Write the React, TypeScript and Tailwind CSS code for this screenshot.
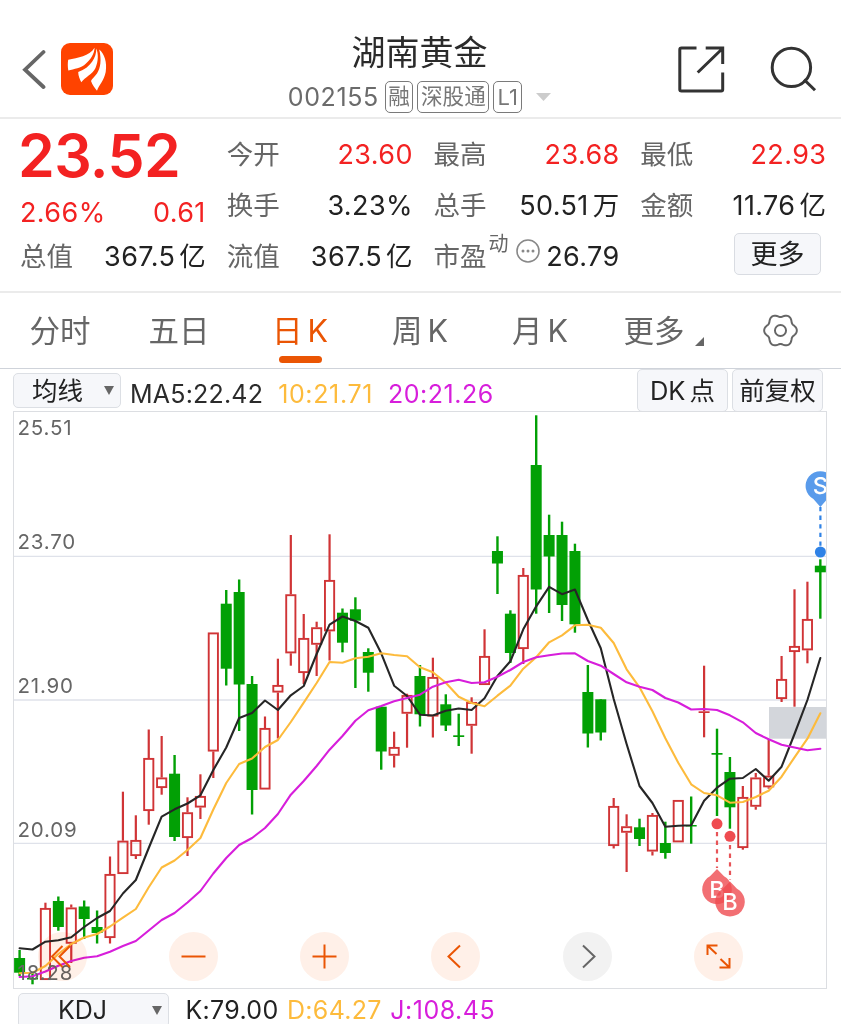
import type { ReactNode } from "react";

type Candle = [color: "r" | "g", high: number, open: number, close: number, low: number];

const X0 = 19.6;
const STEP = 12.915;
const cx = (i: number) => X0 + STEP * i;

const candles: Candle[] = [
  ["g", 950, 958, 972.7, 976], ["g", 972, 978, 979.5, 984.3], ["r", 902.7, 908, 980, 980], ["g", 896.5, 901, 927, 930.7],
  ["r", 904.5, 907.5, 943.7, 963], ["g", 900.5, 906.5, 919, 939], ["g", 910.5, 927, 933, 943.5], ["r", 856.5, 874, 938, 943.5],
  ["r", 791.7, 840.7, 874, 874], ["r", 815.3, 840, 856, 859], ["r", 729.5, 758, 811, 824.7], ["r", 736, 777.5, 788, 794.7],
  ["g", 755, 773.7, 837, 841], ["r", 797.3, 812.3, 838, 856], ["r", 774.3, 796, 807.5, 819], ["r", 632.5, 632.5, 751.5, 778],
  ["g", 590, 603.7, 668.7, 685.5], ["g", 579.5, 592, 684.5, 731], ["g", 676, 684, 790, 814.5], ["r", 716.5, 728, 789.5, 789.5],
  ["r", 658.7, 685, 692.5, 738.5], ["r", 535, 594.3, 653.3, 665.7], ["r", 614, 638, 673, 684], ["r", 621.7, 627.3, 644.7, 676],
  ["r", 534.3, 580, 631.3, 660.5], ["g", 608.5, 612.7, 642.7, 652.3], ["g", 597.3, 609.3, 620.7, 688], ["g", 648.3, 652, 672.7, 691.7],
  ["g", 706.7, 706.7, 751.5, 769.7], ["r", 731.7, 747, 755.7, 767.5], ["r", 693.7, 695, 713.7, 747.7], ["g", 665, 676, 714.3, 726.5],
  ["r", 657.7, 677, 716.5, 737.5], ["g", 694.3, 704.3, 725.5, 731], ["g", 713.7, 735.3, 737, 746], ["r", 697.3, 702, 725.7, 753.7],
  ["r", 629.3, 656, 685, 685], ["g", 536.3, 551, 563.5, 594], ["g", 610.3, 613.7, 653, 663], ["r", 568, 575, 649, 664],
  ["g", 415.3, 465, 589.5, 613.7], ["g", 514.7, 535, 556.5, 613], ["g", 521.7, 535, 605, 621], ["g", 543.7, 551, 624.3, 632.7],
  ["g", 665, 692, 733.5, 747.5], ["g", 699.3, 699.3, 732.5, 740.5], ["r", 798, 806, 846, 848.5], ["r", 814.3, 826.3, 832.7, 872],
  ["g", 818.7, 827.3, 839, 846], ["r", 813, 815, 851.5, 855.5], ["g", 821.7, 843, 853, 858.7], ["r", 800, 800, 842.3, 842.3],
  ["g", 796.5, 825, 826.5, 843.7], ["r", 665.7, 711.3, 713, 737.3], ["g", 728.7, 753, 754.7, 816], ["g", 757, 772, 807.3, 828.7],
  ["r", 786, 797, 848, 849.7], ["r", 773, 777.5, 806.7, 809.7], ["r", 739.3, 775.7, 787.3, 788.7], ["r", 656, 679, 699, 702],
  ["r", 589.3, 646, 652, 706.7], ["r", 581.7, 619, 650.3, 663.3], ["g", 559.3, 565.7, 572.3, 618.7],
];

const ma5 = [
  948.3, 949.5, 941.7, 940.3, 937.3, 927, 918, 911, 893.5, 880, 848, 816.7, 809.3, 803.5, 795.3, 770, 747.5, 718, 713, 700.5, 710,
  695.3, 686, 654, 624.7, 616.5, 621, 627.7, 653.3, 685.7, 696, 714.7, 715.5, 710.7, 708.5, 710, 698.3, 676, 661.3, 629.3, 606.3,
  586.9, 594.2, 589.5, 620, 648.3, 699, 744, 786, 803, 826.7, 825.7, 825.2, 800.7, 787.7, 778.7, 778, 769, 780.7, 766.7, 734, 700, 658,
];
const ma10 = [
  973.3, 972.7, 966, 954, 944, 937.5, 934, 926.5, 917.7, 909, 887.3, 867.5, 860.5, 850, 838, 809.5, 783, 764, 758.5, 747, 740, 722,
  702.7, 683, 662, 662.7, 658.3, 656.7, 653.3, 655, 656.2, 667.3, 672.3, 682.7, 696.7, 703, 706.3, 695.7, 685.7, 668.7, 657.3, 642.3,
  635.3, 625.3, 624.7, 627.7, 643, 669.3, 687.3, 711.3, 738.3, 762.7, 784.3, 793, 795.3, 802.7, 802, 797, 790.7, 776.7, 757.3, 738.7, 713.3,
];
const ma20 = [
  977, 976.3, 971.5, 965.7, 961, 957.7, 956.3, 951.7, 946, 941, 930.5, 920, 913, 902.5, 891, 873.5, 858, 845, 838, 828, 814, 794.7,
  781, 766, 749.7, 736, 720.7, 710.3, 706, 701.3, 698, 694.7, 686.7, 682.3, 679.7, 683, 682.3, 676.7, 670, 662, 657.3, 655.3, 653.5,
  653.3, 661, 665.7, 674, 682.3, 686.7, 690, 698, 702.5, 709.5, 709, 710, 715.3, 722.3, 733, 739.3, 744.7, 747.5, 750.3, 748.7,
];
const toPoints = (v: number[]) => v.map((y, i) => `${cx(i).toFixed(2)},${y}`).join(" ");

function Marker({ x, y, color, letter, up }: { x: number; y: number; color: string; letter: string; up: boolean }) {
  const d = up
    ? `M${x} ${y - 20.3} L${x + 7} ${y - 13} A14.8 14.8 0 1 1 ${x - 7} ${y - 13} Z`
    : `M${x} ${y + 21} L${x + 7} ${y + 13} A14.8 14.8 0 1 0 ${x - 7} ${y + 13} Z`;
  return (
    <g>
      <path d={d} fill={color} fillOpacity="0.8" />
      <text x={x} y={y + 8.3} textAnchor="middle" fontSize="23.5" fontWeight="500" fill="#fff">
        {letter}
      </text>
    </g>
  );
}

function KLineChart() {
  return (
    <svg viewBox="14 412 812 576" className="block h-full w-full font-[Inter,sans-serif]">
      {[556.3, 700, 843.3].map((y) => (
        <line key={y} x1="14" x2="826" y1={y} y2={y} stroke="#dfe2ea" strokeWidth="1.3" />
      ))}
      <rect x="769" y="707" width="58" height="31.7" fill="#d3d6db" />
      {candles.map(([color, hi, top, bottom, lo], i) => {
        const x = cx(i);
        if (color === "g") {
          return (
            <g key={i} fill="#02a005">
              <rect x={x - 1.2} y={hi} width="2.4" height={lo - hi} />
              <rect x={x - 5.5} y={top} width="11" height={bottom - top} />
            </g>
          );
        }
        return (
          <g key={i} fill="#d03436">
            <rect x={x - 1.1} y={hi} width="2.2" height={Math.max(0, top - hi)} />
            <rect x={x - 1.1} y={bottom} width="2.2" height={Math.max(0, lo - bottom)} />
            {bottom - top < 3 ? (
              <rect x={x - 5.5} y={top} width="11" height={bottom - top} />
            ) : (
              <rect x={x - 4.6} y={top + 0.9} width="9.2" height={bottom - top - 1.8} fill="none" stroke="#d03436" strokeWidth="1.9" />
            )}
          </g>
        );
      })}
      <g fill="none" strokeWidth="2.1" strokeLinejoin="round" strokeLinecap="round">
        <polyline points={toPoints(ma5)} stroke="#262626" />
        <polyline points={toPoints(ma10)} stroke="#fdbb3c" />
        <polyline points={toPoints(ma20)} stroke="#d71edb" />
      </g>
      <g strokeWidth="2.2" strokeDasharray="4.3 4.3">
        <line x1="820.4" x2="820.4" y1="507" y2="546" stroke="#2f82e6" />
        <line x1="717" x2="717" y1="832" y2="868" stroke="#e75458" />
        <line x1="730" x2="730" y1="845" y2="880" stroke="#e75458" />
      </g>
      <circle cx="820.4" cy="552" r="5.5" fill="#2f82e6" />
      <circle cx="717" cy="823.8" r="5.5" fill="#ef4b50" />
      <circle cx="730" cy="836.3" r="5.5" fill="#ef4b50" />
      <Marker x={820.4} y={486} color="#2f82e6" letter="S" up={false} />
      <Marker x={717} y={889.3} color="#ef4b50" letter="B" up />
      <Marker x={730} y={901.7} color="#ef4b50" letter="B" up />
      <g fontSize="20.5" fill="#666" letterSpacing="0.8">
        <text x="17.5" y="435.3">25.51</text>
        <text x="17.5" y="549.3">23.70</text>
        <text x="17.5" y="693">21.90</text>
        <text x="17.5" y="836.5">20.09</text>
        <text x="17.5" y="980.3">18.28</text>
      </g>
    </svg>
  );
}

function RoundButton({ gray, children }: { gray?: boolean; children: ReactNode }) {
  return (
    <button className={`relative size-[49px] ${gray ? "text-[#666]" : "text-[#ea5504]"}`}>
      <span className={`absolute inset-0 rounded-full mix-blend-multiply ${gray ? "bg-[#f2f2f2]" : "bg-[#fff0e8]"}`} />
      <svg viewBox="0 0 49 49" fill="none" stroke="currentColor" strokeWidth="2" className="relative block size-full">
        {children}
      </svg>
    </button>
  );
}

function Field({ label, value, unit, red }: { label: string; value: string; unit?: string; red?: boolean }) {
  return (
    <div className="flex h-[51px] items-center justify-between">
      <span className="pt-px text-[26.5px] text-[#666]">{label}</span>
      <span className={`flex items-center pt-px text-[27px] ${red ? "text-[#f32222]" : "text-[#222]"}`}>
        <span className="-mr-[0.4px] tracking-[0.4px]">{value}</span>
        {unit && <span className="ml-[4.4px] text-[26.5px]">{unit}</span>}
      </span>
    </div>
  );
}

function Badge({ children }: { children: ReactNode }) {
  return (
    <span className="flex h-8 items-center rounded-[5px] border border-[#7a7a7a] px-[2.5px] text-[21.6px] leading-none text-[#777]">{children}</span>
  );
}

function gearPath() {
  const pts: string[] = [];
  for (let a = 0; a < 360; a += 4) {
    const t = (a * Math.PI) / 180;
    const r = 14.6 + 1.4 * Math.cos(6 * t) - 0.1 * Math.cos(12 * t);
    pts.push(`${(18 + r * Math.cos(t)).toFixed(2)} ${(18 + r * Math.sin(t)).toFixed(2)}`);
  }
  return `M${pts.join("L")}Z`;
}

function Tab({ children, active }: { children: ReactNode; active?: boolean }) {
  return (
    <div className={`relative flex w-[120px] items-center justify-center gap-[5px] pt-[2px] text-[30.5px] ${active ? "text-[#ea5504]" : "text-[#666]"}`}>
      {children}
      {active && <span className="absolute bottom-[5px] left-[39px] h-[7px] w-[43px] rounded-full bg-[#ea5504]" />}
    </div>
  );
}

export default function App() {
  return (
    <div className="flex h-[1024px] w-[841px] flex-col overflow-hidden bg-white font-[Inter,'Noto_Sans_CJK_SC',sans-serif] leading-none whitespace-nowrap text-[#222]">
      <header className="flex h-[119px] shrink-0 items-start justify-between border-b-2 border-[#ebebeb] pt-[33px] pr-[23px] pl-[21px]">
        <div className="flex w-[250px] items-center gap-[15px] pt-[10px]">
          <svg viewBox="0 0 25 52" fill="none" stroke="#666" strokeWidth="3.8" strokeLinecap="round" className="h-[52px] w-[25px]">
            <path d="M22.5 9 4 26.7 22.5 44" />
          </svg>
          <svg viewBox="0 0 52 52" className="size-[52px]">
            <rect width="52" height="52" rx="9" fill="#ff4300" />
            <g fill="#fff">
              <path d="M33.6 4.8C28 13.500 17 14.500 7.2 16.800C6.6 20 6.7 24 7.3 27.5C13 25.800 20 25.500 25 20.500C30 16 33.200 11 33.600 4.800Z" />
              <path d="M35.300 5.500C35.500 14 30 24.500 17.200 29C17.300 33 18.800 36.500 20.300 39.300C24 34 31.500 31.500 34.500 25C37.500 18 37.400 10.500 35.300 5.500Z" />
              <path d="M38.200 6.500C40.800 17 39.500 25 36 30.500C33.500 34 31 35.500 30 38C31.500 42 34 45.500 36 47.700C38 42 43 37.500 44.700 29C46.200 19 43.500 11 38.200 6.500Z" />
            </g>
          </svg>
        </div>
        <div className="flex flex-col items-center">
          <h1 className="h-[40px] text-[34px] leading-[40px] font-normal text-[#2b2b2b]">湖南黄金</h1>
          <div className="mt-2 flex items-center gap-1">
            <span className="mr-[2px] text-[25px] tracking-[0.600px] text-[#6b6b6b]">002155</span>
            <Badge>融</Badge>
            <Badge>深股通</Badge>
            <Badge>
              <span className="px-[0.75px] text-[22px]">L1</span>
            </Badge>
            <svg viewBox="0 0 15 8" className="ml-[10px] h-2 w-[15px]">
              <path d="M0 0H15L7.500 8Z" fill="#ccc" />
            </svg>
          </div>
        </div>
        <div className="flex w-[250px] items-start justify-end gap-[41px] pt-[12px]">
          <svg viewBox="677 45 48 49" fill="none" stroke="#333" strokeWidth="3" className="h-[49px] w-[48px]">
            <path d="M696.500 48H681.500Q679.800 48 679.800 49.700V89.500Q679.800 91 681.500 91H721.200Q722.700 91 722.700 89.500V72.500M705.700 48H722.700V64M697.700 72.500 722 49" />
          </svg>
          <svg viewBox="766 45 52 49" fill="none" stroke="#333" strokeWidth="3" className="h-[49px] w-[52px]">
            <circle cx="791.400" cy="67.400" r="19.200" />
            <path d="M804 79.500 815 90.300" />
          </svg>
        </div>
      </header>

      <section className="grid h-[174px] shrink-0 grid-cols-4 gap-x-[21px] border-b-2 border-[#ebebeb] pt-[9px] pr-[15px] pl-5">
        <div>
          <div className="-ml-[2px] flex h-[54px] items-center text-[59px] font-semibold tracking-[-0.600px] text-[#f32222]">23.52</div>
          <div className="flex h-[48px] items-center justify-between pt-[13px] text-[27px] tracking-[0.400px] text-[#f32222]">
            <span>2.66%</span>
            <span>0.61</span>
          </div>
          <Field label="总值" value="367.5" unit="亿" />
        </div>
        <div>
          <Field label="今开" value="23.60" red />
          <Field label="换手" value="3.23%" />
          <Field label="流值" value="367.5" unit="亿" />
        </div>
        <div>
          <Field label="最高" value="23.68" red />
          <Field label="总手" value="50.51" unit="万" />
          <div className="flex h-[51px] items-center pt-px text-[26.500px]">
            <span className="text-[#666]">市盈</span>
            <span className="mb-6 ml-[2px] text-[20px] text-[#666]">动</span>
            <svg viewBox="0 0 24 24" className="mb-[11px] ml-[7px] size-6">
              <circle cx="12" cy="12" r="11" fill="none" stroke="#888" strokeWidth="1.600" />
              <g fill="#888">
                <circle cx="7" cy="12" r="1.500" />
                <circle cx="12" cy="12" r="1.500" />
                <circle cx="17" cy="12" r="1.500" />
              </g>
            </svg>
            <span className="-mr-[0.4px] ml-auto text-[27px] tracking-[0.400px]">26.79</span>
          </div>
        </div>
        <div>
          <Field label="最低" value="22.93" red />
          <Field label="金额" value="11.76" unit="亿" />
          <div className="flex justify-end pt-[3px] pr-[5px]">
            <button className="h-[42px] w-[87px] rounded-[5px] border border-[#d9dce2] bg-[#f6f7fa] pt-px text-[27px]">更多</button>
          </div>
        </div>
      </section>

      <nav className="flex h-[76px] shrink-0 border-b border-[#cfd3da]">
        <Tab>分时</Tab>
        <Tab>
          <span className="mr-[2px]">五日</span>
        </Tab>
        <Tab active>
          <span>日</span>
          <span>K</span>
        </Tab>
        <Tab>
          <span>周</span>
          <span>K</span>
        </Tab>
        <Tab>
          <span>月</span>
          <span>K</span>
        </Tab>
        <Tab>
          <span className="ml-[7px]">更多</span>
          <svg viewBox="0 0 9 9" className="mt-[20px] ml-[5px] size-[9px]">
            <path d="M9 0V9H0Z" fill="#666" />
          </svg>
        </Tab>
        <Tab>
          <svg viewBox="0 0 36 36" fill="none" stroke="#666" strokeWidth="1.900" strokeLinejoin="round" className="-mt-[3px] size-[37px]">
            <path d={gearPath()} />
            <circle cx="18" cy="18" r="5.400" />
          </svg>
        </Tab>
      </nav>

      <div className="flex h-[42px] shrink-0 items-start pr-[18px] pl-[13px]">
        <div className="mt-[4px] flex h-[35px] w-[108px] items-center rounded-[5px] border border-[#dcdfe4] bg-[#f6f7fa] pl-[18px] text-[25.500px]">
          均线
          <svg viewBox="0 0 10 9" className="ml-[21px] h-[9px] w-[10px]">
            <path d="M0 0H10L5 9Z" fill="#666" />
          </svg>
        </div>
        <div className="mt-[13px] flex gap-[15px] pl-[9px] text-[25px]">
          <span className="tracking-[0.200px] text-[#2b2b2b]">MA5:22.42</span>
          <span className="tracking-[0.650px] text-[#fdbb3c]">10:21.71</span>
          <span className="tracking-[0.500px] text-[#d71edb]">20:21.26</span>
        </div>
        <div className="ml-auto flex gap-1 text-[25.500px]">
          <button className="flex h-[43px] w-[91px] items-center justify-center gap-[4px] rounded-[5px] border border-[#dcdfe4] bg-[#f6f7fa]">
            <span>DK</span>
            <span>点</span>
          </button>
          <button className="h-[43px] w-[91px] rounded-[5px] border border-[#dcdfe4] bg-[#f6f7fa]">前复权</button>
        </div>
      </div>

      <main className="relative ml-[13px] h-[578px] w-[814px] shrink-0 border border-[#dcdee2]">
        <KLineChart />
        <div className="absolute bottom-[7px] left-[23.5px] flex w-[705.5px] justify-between">
          <RoundButton>
            <path d="M24.500 14 14 24.500 24.500 35M32 14 21.500 24.500 32 35" />
          </RoundButton>
          <RoundButton>
            <path d="M12.500 24.500H36.500" />
          </RoundButton>
          <RoundButton>
            <path d="M12.500 24.500H36.500M24.500 12.500V36.500" />
          </RoundButton>
          <RoundButton>
            <path d="M29 13.500 17.500 24.500 29 35.500" />
          </RoundButton>
          <RoundButton gray>
            <path d="M20 13.500 31.500 24.500 20 35.500" />
          </RoundButton>
          <RoundButton>
            <path d="M22.500 22 13.500 13.500M13.500 23V13.500H23.500M26.500 27 35.500 35.500M35.500 26V35.500H25.500" />
          </RoundButton>
        </div>
      </main>

      <footer className="flex h-[35px] shrink-0 items-start pl-[18px]">
        <div className="mt-[4px] flex h-[35px] w-[151px] shrink-0 items-center justify-end rounded-[5px] border border-[#dcdfe4] bg-[#f6f7fa] pr-[6px] text-[25px]">
          <span className="mr-[45px]">KDJ</span>
          <svg viewBox="0 0 10 9" className="h-[9px] w-[10px]">
            <path d="M0 0H10L5 9Z" fill="#666" />
          </svg>
        </div>
        <div className="mt-[9px] flex gap-[8.5px] pl-[16.5px] text-[25px]">
          <span className="tracking-[0.300px]">K:79.00</span>
          <span className="tracking-[0.300px] text-[#fdbb3c]">D:64.27</span>
          <span className="tracking-[0.500px] text-[#d71edb]">J:108.45</span>
        </div>
      </footer>
    </div>
  );
}
